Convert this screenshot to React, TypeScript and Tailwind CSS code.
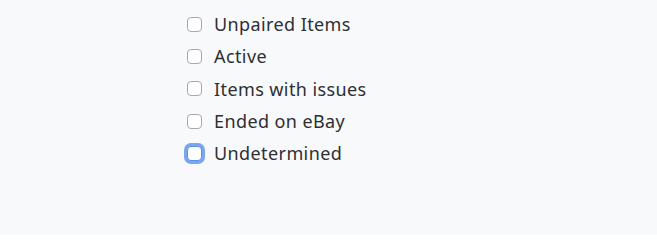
import React from "react";

const filters = ["Unpaired Items", "Active", "Items with issues", "Ended on eBay", "Undetermined"];

export default function App() {
  return (
    <div className="w-[657px] h-[235px] bg-[#f8f9fb] pl-[187px] pt-[8px]" style={{ fontFamily: "'Noto Sans', 'Open Sans', sans-serif" }}>
      <ul className="flex flex-col">
        {filters.map((label, i) => (
          <li key={label} className="flex items-center h-[32.3px] gap-[12px]">
            <span
              className={
                "w-[15px] h-[15px] rounded-[4px] bg-white border " +
                (i === 4
                  ? "border-[#5b8fe8] ring-[3px] ring-[#7aa6f0] ring-offset-0"
                  : "border-[#a9a9ad]")
              }
            />
            <span className="text-[18px] tracking-[0.4px] text-[#2e2f33] leading-none">{label}</span>
          </li>
        ))}
      </ul>
    </div>
  );
}
